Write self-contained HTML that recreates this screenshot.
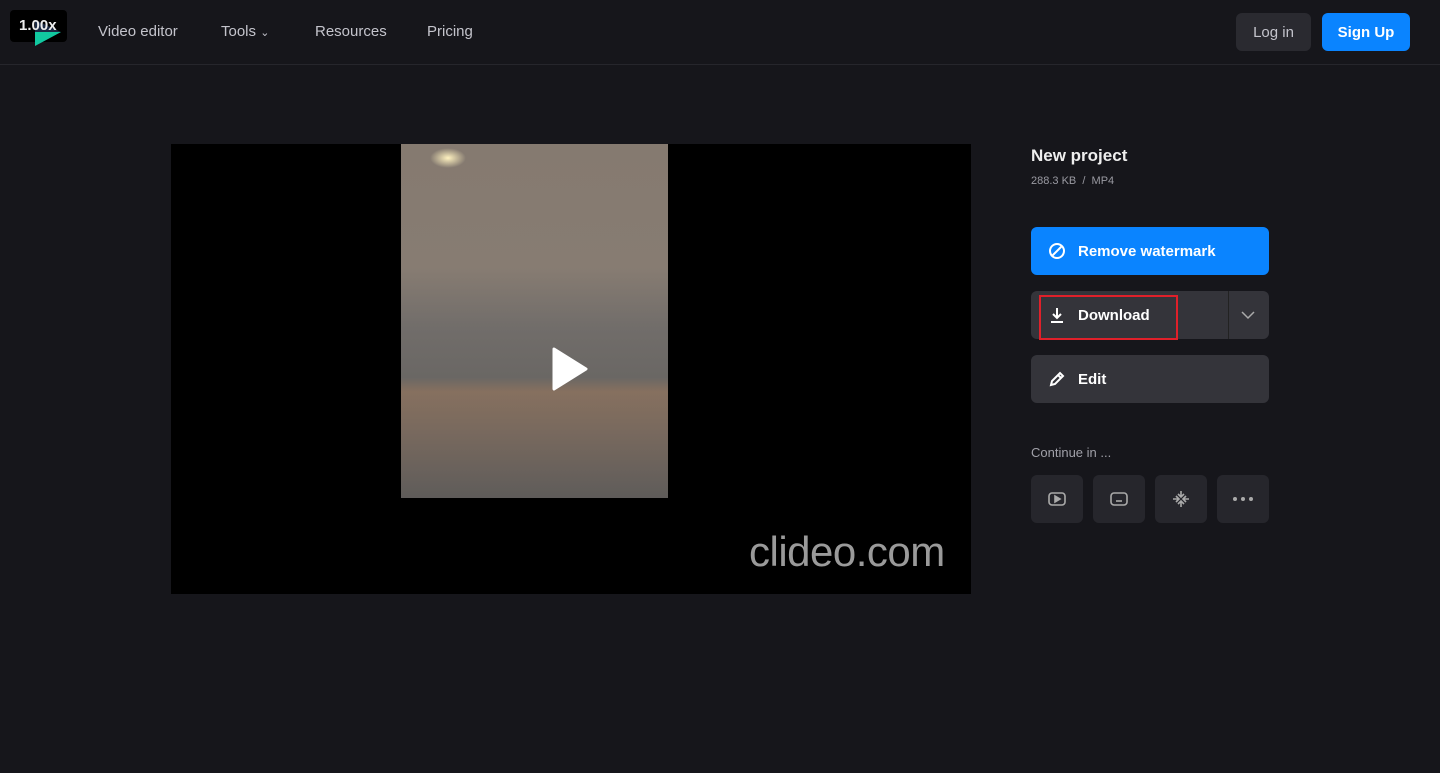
<!DOCTYPE html>
<html><head><style>
*{margin:0;padding:0;box-sizing:border-box}
body{width:1440px;height:773px;background:#16161b;font-family:"Liberation Sans",sans-serif;color:#fff;position:relative;overflow:hidden}
.hdr{position:absolute;left:0;top:0;width:1440px;height:65px;border-bottom:1px solid #26262c}
.nav{position:absolute;top:23px;font-size:15px;color:#c4c4cc}
.btn{position:absolute;border-radius:6px;font-size:15px;font-weight:bold;display:flex;align-items:center}
.sq{position:absolute;top:475px;width:52px;height:48px;background:#26262c;border-radius:6px;display:flex;align-items:center;justify-content:center}
</style></head><body>
<div class="hdr"></div>
<div style="position:absolute;left:10px;top:10px;width:57px;height:32px;background:#000;border-radius:4px"></div>
<svg style="position:absolute;left:33px;top:18px" width="30" height="30"><polygon points="2,2 28,14 2,28" fill="#1b2a44"/><polygon points="2,14 28,14 2,28" fill="#11c9a0"/></svg>
<div style="position:absolute;left:19px;top:17px;font-size:15px;font-weight:bold;color:#eee">1.00x</div>
<div class="nav" style="left:98px">Video editor</div>
<div class="nav" style="left:221px">Tools <span style="font-size:11px">&#8964;</span></div>
<div class="nav" style="left:315px">Resources</div>
<div class="nav" style="left:427px">Pricing</div>
<div class="btn" style="left:1236px;top:13px;width:75px;height:38px;background:#2a2a30;color:#c4c4cc;font-weight:normal;justify-content:center">Log in</div>
<div class="btn" style="left:1322px;top:13px;width:88px;height:38px;background:#0a84ff;justify-content:center">Sign Up</div>

<div style="position:absolute;left:171px;top:144px;width:800px;height:450px;background:#000"></div>
<div style="position:absolute;left:401px;top:144px;width:267px;height:354px;background:linear-gradient(#857a70 0%,#877c72 35%,#716d6a 52%,#6a6764 66%,#86705f 70%,#7a6a5e 80%,#5f5c5a 100%)"></div>
<div style="position:absolute;left:430px;top:148px;width:36px;height:20px;border-radius:50%;background:radial-gradient(#fff2c0,rgba(255,230,170,0) 70%)"></div>
<svg style="position:absolute;left:552px;top:347px" width="36" height="44"><polygon points="2,2 34,22 2,42" fill="#fff" stroke="#fff" stroke-width="3" stroke-linejoin="round"/></svg>
<div style="position:absolute;left:749px;top:528px;font-size:42px;color:#9a9a9a;letter-spacing:-0.5px">clideo.com</div>

<div style="position:absolute;left:1031px;top:146px;font-size:17px;font-weight:bold;color:#eee">New project</div>
<div style="position:absolute;left:1031px;top:175px;font-size:11px;color:#9a9aa2">288.3 KB &nbsp;/ &nbsp;MP4</div>
<div class="btn" style="left:1031px;top:227px;width:238px;height:48px;background:#0a84ff">
<svg style="margin:0 11px 0 16px" width="20" height="20" fill="none" stroke="#fff" stroke-width="2"><circle cx="10" cy="10" r="7"/><line x1="5" y1="15" x2="15" y2="5"/></svg>Remove watermark</div>
<div class="btn" style="left:1031px;top:291px;width:238px;height:48px;background:#34343a">
<svg style="margin:0 11px 0 16px" width="20" height="20" fill="none" stroke="#fff" stroke-width="2"><path d="M10 3v10M6 9l4 4 4-4M4 17h12"/></svg>Download
<div style="position:absolute;left:197px;top:0;width:1px;height:48px;background:#222"></div>
<svg style="position:absolute;left:209px;top:17px" width="16" height="14" fill="none" stroke="#aaa" stroke-width="1.5"><path d="M2 4l6 6 6-6"/></svg></div>
<div style="position:absolute;left:1039px;top:295px;width:139px;height:45px;border:2px solid #e0202a"></div>
<div class="btn" style="left:1031px;top:355px;width:238px;height:48px;background:#34343a">
<svg style="margin:0 11px 0 16px" width="20" height="20" fill="none" stroke="#fff" stroke-width="2"><path d="M4 16l1-4 8-8 3 3-8 8zM11 6l3 3"/></svg>Edit</div>
<div style="position:absolute;left:1031px;top:445px;font-size:13px;color:#a0a0a8">Continue in ...</div>
<div class="sq" style="left:1031px"><svg width="20" height="20" fill="none" stroke="#aaa" stroke-width="1.6"><rect x="2" y="4" width="16" height="12" rx="3"/><polygon points="8,7 13,10 8,13" fill="#aaa"/></svg></div>
<div class="sq" style="left:1093px"><svg width="20" height="20" fill="none" stroke="#aaa" stroke-width="1.6"><rect x="2" y="4" width="16" height="12" rx="3"/><line x1="7" y1="12" x2="13" y2="12"/></svg></div>
<div class="sq" style="left:1155px"><svg width="20" height="20" fill="none" stroke="#aaa" stroke-width="1.6"><path d="M10 2v5M7 5l3 3 3-3M10 18v-5M7 15l3-3 3 3M2 10h5M5 7l3 3-3 3M18 10h-5M15 7l-3 3 3 3"/></svg></div>
<div class="sq" style="left:1217px"><svg width="22" height="6"><circle cx="3" cy="3" r="2" fill="#aaa"/><circle cx="11" cy="3" r="2" fill="#aaa"/><circle cx="19" cy="3" r="2" fill="#aaa"/></svg></div>
</body></html>
